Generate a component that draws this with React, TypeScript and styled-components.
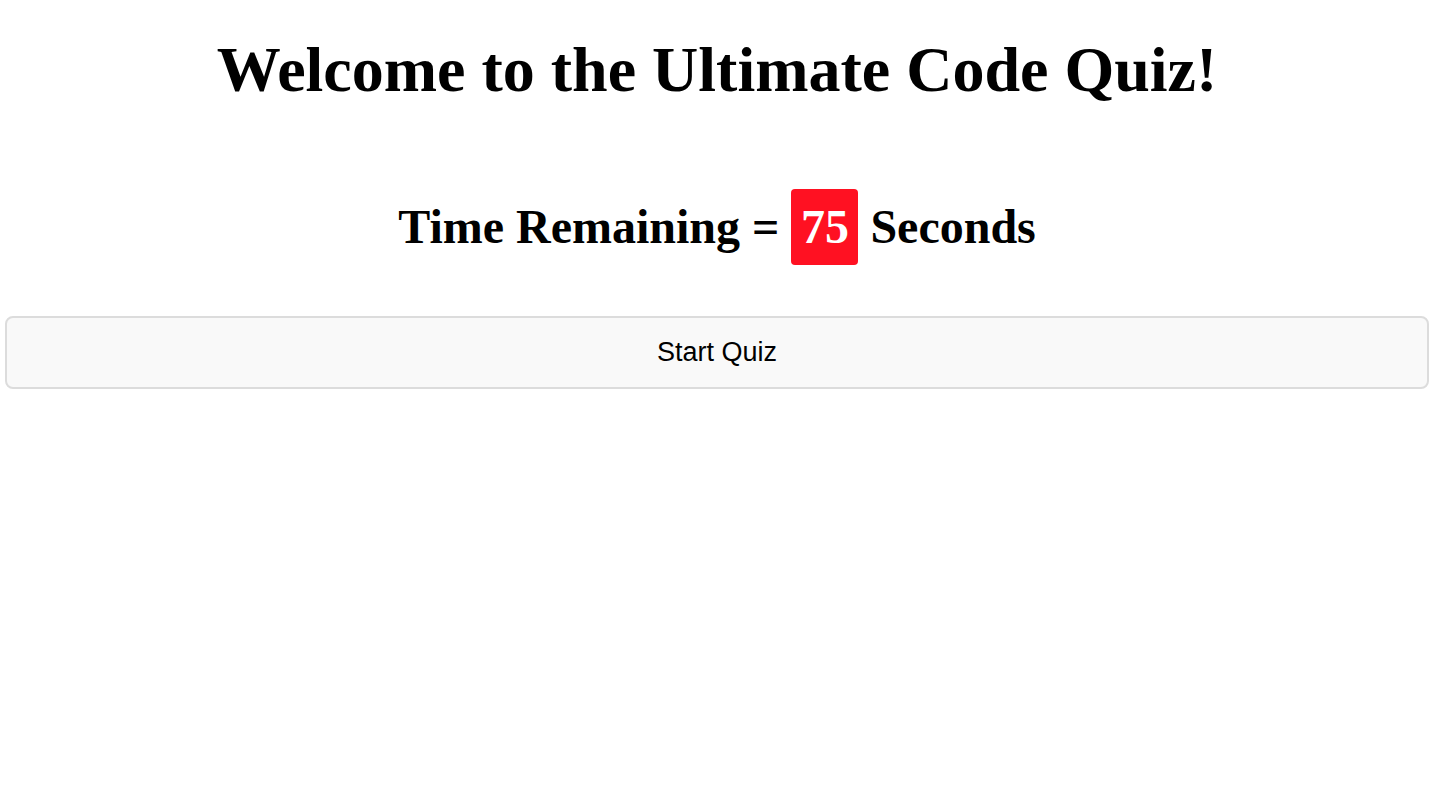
import React from "react";
import styled, { createGlobalStyle } from "styled-components";

const Global = createGlobalStyle`
  html, body { margin: 0; padding: 0; background: #fff; }
  body { font-family: "Liberation Serif", "Times New Roman", serif; color: #000; }
`;

const Page = styled.main`
  display: flex;
  flex-direction: column;
  align-items: stretch;
  padding: 0 7px 0 5px;
`;

const Title = styled.h1`
  margin: 30px 0 0;
  text-align: center;
  font-size: 64px;
  line-height: 80px;
  font-weight: bold;
`;

const Timer = styled.h2`
  margin: 79px 0 0;
  display: flex;
  justify-content: center;
  align-items: center;
  gap: 12px;
  font-size: 48px;
  font-weight: bold;
  line-height: 76px;
`;

const Count = styled.span`
  display: inline-flex;
  align-items: center;
  justify-content: center;
  width: 67px;
  height: 76px;
  background: #ff1122;
  color: #fff;
  border-radius: 4px;
  font-weight: bold;
`;

const StartButton = styled.button`
  margin-top: 51px;
  height: 73px;
  border: 2px solid #dcdcdc;
  border-radius: 8px;
  background: #f9f9f9;
  font-family: "Liberation Sans", Arial, sans-serif;
  font-size: 27px;
  color: #000;
  cursor: pointer;
`;

export default function App() {
  return (
    <>
      <Global />
      <Page>
        <Title>Welcome to the Ultimate Code Quiz!</Title>
        <Timer>
          <span>Time Remaining =</span>
          <Count>75</Count>
          <span>Seconds</span>
        </Timer>
        <StartButton>Start Quiz</StartButton>
      </Page>
    </>
  );
}
